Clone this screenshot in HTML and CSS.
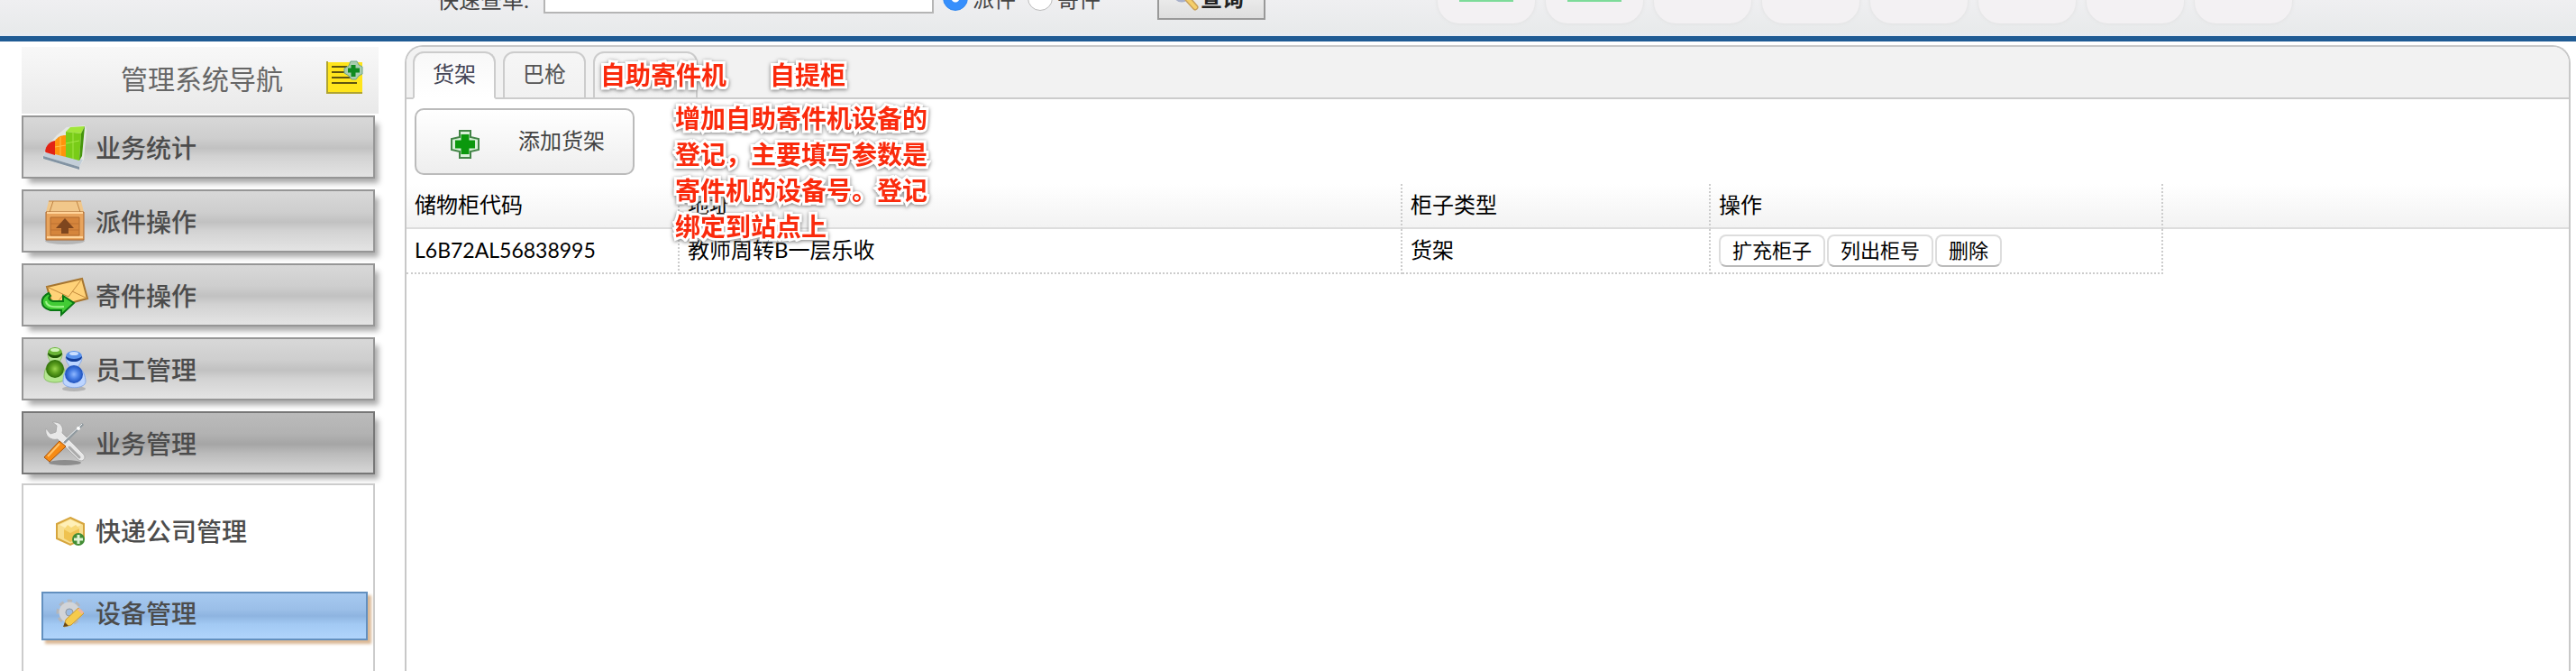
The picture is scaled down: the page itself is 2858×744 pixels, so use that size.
FILE: index.html
```html
<!DOCTYPE html>
<html lang="zh-CN">
<head>
<meta charset="utf-8">
<title>管理系统</title>
<link rel="stylesheet" href="styles.css">
</head>
<body>
<header class="topbar">
  <form class="search">
    <label class="search-label" for="q">快速查单:</label>
    <input class="search-input" id="q" type="text">
    <label class="choice"><input class="radio" type="radio" name="kind" checked>派件</label>
    <label class="choice"><input class="radio" type="radio" name="kind">寄件</label>
    <button class="search-button" type="button">
      <svg width="28" height="28" viewBox="0 0 28 28"><circle cx="9" cy="9" r="8" fill="#dfe6f2" stroke="#a9b1cb" stroke-width="3"/><path d="M15 14l9 10" stroke="#c9a05a" stroke-width="7" stroke-linecap="round"/><path d="M15 14l9 10" stroke="#f5cf6a" stroke-width="4" stroke-linecap="round"/></svg>查询
    </button>
  </form>
  <div class="tiles">
    <span class="tile tile-on"></span><span class="tile tile-on"></span><span class="tile"></span><span class="tile"></span><span class="tile"></span><span class="tile"></span><span class="tile"></span><span class="tile"></span>
  </div>
</header>
<div class="layout">
  <nav class="sidebar">
    <div class="nav-head">
      <span class="nav-title">管理系统导航</span>
      <svg width="40" height="38" viewBox="0 0 40 38"><path d="M0 1h40v35H0z" fill="#ffe51c"/><path d="M1 0v35h39" fill="none" stroke="#b0a430" stroke-width="2"/><path d="M6 6h17M6 12h17M6 18h28M6 24h28" stroke="#5e5410" stroke-width="2"/><path d="M27 0h7l2 4 4 2v8l-4 2-3 4h-5l-3-4-5-3V8l5-3z" fill="#a9cdb0" stroke="#6fa583"/><path d="M30 4v13M24 10h13" stroke="#108a20" stroke-width="5"/></svg>
    </div>
    <a class="nav-item" href="#">
      <svg width="52" height="50" viewBox="0 0 52 50"><path d="M3 31l4-9 10-11 11-9L48 0l2 5-3 33-7 11L1 37z" fill="#e9ece9" opacity=".8"/><path d="M4 30l42 8-4 8L2 34z" fill="#c3ced8"/><path d="M2 34l40 12v3L2 37z" fill="#8293a3"/><path d="M4 29c1-7 5-11 11-12v16l-10-3z" fill="#e22314"/><path d="M15 17c3-4 6-6 12-6v24l-12-3z" fill="#ff930c"/><path d="M15 24l12-2M21 13v20" stroke="#ffc24a" stroke-width="1"/><path d="M27 7l5-5 16-1-4 8z" fill="#a1e63a"/><path d="M27 7l17 2-2 30-15-4z" fill="#79cc18"/><path d="M44 9l4-8-3 33-3 5z" fill="#45950b"/><path d="M35 8v29M27 20l15-3" stroke="#a4e646" stroke-width="1"/></svg>业务统计</a>
    <a class="nav-item" href="#">
      <svg width="52" height="50" viewBox="0 0 52 50"><ellipse cx="26" cy="46" rx="22" ry="4" fill="#8d8d8d" opacity=".5"/><path d="M8 2h36l3 12H5z" fill="#f1c78a"/><path d="M8 2h36M13 2l-4 12M39 2l4 12" fill="none" stroke="#bf8343"/><path d="M5 14h42v31H5z" fill="#e8a45d" stroke="#a9642c"/><path d="M10 20h32v20H10z" fill="#d5853c" stroke="#b16b2f"/><path d="M10 27h32M10 34h32" stroke="#bd7131"/><path d="M26 21l10 11h-6v6h-8v-6h-6z" fill="#7e461e"/><path d="M6 15h40M6 42h40" stroke="#ffd49a" stroke-width="2"/></svg>派件操作</a>
    <a class="nav-item" href="#">
      <svg width="52" height="50" viewBox="0 0 52 50"><path d="M6 15L45 6l6 22-38 10z" fill="#ffd278" stroke="#a6752f" stroke-width="2"/><path d="M6 15l24 11L45 6M13 38l11-14M51 28L34 20" fill="none" stroke="#c48b3d"/><path d="M8 22C-2 27-2 38 10 41h12v5l14-13-12-8v6H13c-5-1-6-4-3-6z" fill="#42cb35" stroke="#087812" stroke-width="2"/><path d="M5 31c1 6 7 7 20 6" fill="none" stroke="#9ef489" stroke-width="2"/></svg>寄件操作</a>
    <a class="nav-item" href="#">
      <svg width="52" height="50" viewBox="0 0 52 50"><defs><radialGradient id="green"><stop offset="0" stop-color="#9ad650"/><stop offset=".5" stop-color="#5da01f"/><stop offset="1" stop-color="#2f6f08"/></radialGradient><radialGradient id="blue"><stop offset="0" stop-color="#8fb8ff"/><stop offset=".5" stop-color="#4a80e6"/><stop offset="1" stop-color="#1d50bb"/></radialGradient></defs><ellipse cx="36" cy="46" rx="13" ry="3" fill="#999" opacity=".6"/><path d="M7 7c0 6 3 8 3 10C5 20 3 27 3 33c0 8 24 8 24 0 0-6-3-13-7-16 0-2 3-4 3-10z" fill="#b4e690" stroke="#86bd60"/><ellipse cx="15" cy="6" rx="8" ry="6" fill="#6ab436"/><path d="M7 6c4 4 12 4 16 0 0 8-16 8-16 0z" fill="#1d5205"/><circle cx="15" cy="24" r="10" fill="url(#green)"/><ellipse cx="15" cy="3" rx="5" ry="2" fill="#d0f3b9"/><path d="M27 11c0 6 4 8 4 11-5 3-7 10-7 16 0 9 25 9 25 0 0-6-3-13-8-16 0-3 4-5 4-11z" fill="#bdd5ff" stroke="#86a9e6"/><ellipse cx="36" cy="10" rx="9" ry="6" fill="#5b93ec"/><path d="M27 10c4 4 14 4 18 0 0 8-18 8-18 0z" fill="#123c98"/><circle cx="36" cy="30" r="10" fill="url(#blue)"/><ellipse cx="36" cy="7" rx="5" ry="2" fill="#cbdfff"/></svg>员工管理</a>
    <a class="nav-item nav-item-open" href="#">
      <svg width="52" height="50" viewBox="0 0 52 50"><ellipse cx="26" cy="46" rx="18" ry="3" fill="#666" opacity=".6"/><path d="M5 8l5 6 6-2 1-7-5-4c9-1 13 5 11 12l24 24c3 4-1 9-6 6L18 20C10 22 3 16 5 8z" fill="#e8e8e8" stroke="#ababab"/><path d="M31 29l11 11" stroke="#aaa" stroke-width="3" stroke-linecap="round"/><path d="M46 3L25 24" stroke="#8f999f" stroke-width="3"/><path d="M45 3L24 23" stroke="#f6f6f6" stroke-width="1"/><circle cx="41" cy="8" r="2" fill="#fff"/><path d="M20 22l7 6L9 45l-6-5z" fill="#f68b16" stroke="#a95208"/><path d="M20 25L7 39" stroke="#ffc36a" stroke-width="2"/></svg>业务管理</a>
    <div class="subnav">
      <a class="sub-item" href="#">
        <svg width="32" height="32" viewBox="0 0 32 32"><path d="M16 1l15 7v16l-15 7L1 24V8z" fill="#f8df91" stroke="#d6a53d" stroke-width="2"/><path d="M4 9l12-6 12 6-12 6z" fill="#fff0b8"/><path d="M9 14l7 3 10-4v10l-10 5-7-4z" fill="#efc250"/><path d="M9 14l4-5 4 3 5-3 4 4-10 5z" fill="#f8d877"/><circle cx="25" cy="25" r="7" fill="#438d35"/><path d="M25 20v10M20 25h10" stroke="#e1f5d5" stroke-width="3"/></svg>快递公司管理</a>
      <a class="sub-item sub-item-active" href="#">
        <svg width="32" height="32" viewBox="0 0 32 32"><circle cx="15" cy="15" r="12" fill="none" stroke="#b4b6ba" stroke-width="5" stroke-dasharray="5 4"/><circle cx="15" cy="15" r="8" fill="none" stroke="#d2d4d8" stroke-width="7"/><circle cx="15" cy="15" r="4" fill="#9dbce2" stroke="#999"/><path d="M25 10l6 6-14 13-8 2 2-8z" fill="#f5cb4c" stroke="#c99a33"/><path d="M25 11l5 5" stroke="#f0b49c" stroke-width="3"/><path d="M10 26l4 4-6 1z" fill="#66471b"/></svg>设备管理</a>
    </div>
  </nav>
  <main class="panel">
    <div class="tabs">
      <button class="tab tab-active" type="button">货架</button>
      <button class="tab" type="button">巴枪</button>
      <button class="tab tab-blank" type="button" aria-label="自助寄件机"></button>
      <p class="note note-tabs"><span>自助寄件机</span><span>自提柜</span></p>
    </div>
    <div class="tools">
      <button class="add-button" type="button">
        <svg class="add-icon" width="32" height="32" viewBox="0 0 32 32"><path d="M10 1h12v7l9 2v12l-9 2v7H10v-7l-9-2V10l9-2z" fill="#d8f0d8" stroke="#438547" stroke-width="2"/><path d="M16 5v22M5 16h22" stroke="#0b980d" stroke-width="9"/></svg>添加货架
      </button>
      <p class="note note-body">增加自助寄件机设备的登记，主要填写参数是寄件机的设备号。登记绑定到站点上</p>
    </div>
    <div class="grid">
      <table class="table">
        <colgroup><col class="col-code"><col class="col-address"><col class="col-type"><col class="col-actions"><col></colgroup>
        <thead><tr><th>储物柜代码</th><th>地址</th><th>柜子类型</th><th>操作</th><th class="rest"></th></tr></thead>
        <tbody><tr><td class="code">L6B72AL56838995</td><td>教师周转B一层乐收</td><td>货架</td><td><div class="actions"><button class="small" type="button">扩充柜子</button><button class="small" type="button">列出柜号</button><button class="small" type="button">删除</button></div></td><td class="rest"></td></tr></tbody>
      </table>
    </div>
  </main>
</div>
</body>
</html>
```

FILE: styles.css
```css
* { box-sizing: border-box; }
body {
  margin: 0;
  height: 100vh;
  display: flex;
  flex-direction: column;
  overflow: hidden;
  background: #fff;
  color: #000;
  font: 24px/32px Lato, "Noto Sans CJK SC", sans-serif;
}
button, input { font: inherit; margin: 0; }
a { color: inherit; text-decoration: none; }
svg { flex: none; overflow: visible; }

.topbar {
  flex: none;
  height: 46px;
  display: flex;
  align-items: flex-end;
  gap: 191px;
  padding-left: 485px;
  overflow: hidden;
  border-bottom: 6px solid #1f5b94;
  background: linear-gradient(#efeff1, #e8eaeb 85%, #e6ebf2);
}
.search { display: flex; align-items: flex-end; padding-bottom: 18px; color: #444; }
.search-label { width: 118px; padding-bottom: 6px; line-height: 32px; }
.search-input { width: 433px; height: 48px; margin: 0 10px 7px 0; border: 2px solid #b5b5b5; background: #fff; }
.choice { display: flex; align-items: flex-end; gap: 5px; height: 42px; padding-bottom: 7px; margin-right: 13px; }
.radio { appearance: none; width: 28px; height: 28px; margin-bottom: 3px; border: 1px solid #bbb; border-radius: 50%; background: #fff; }
.radio:checked { border-color: #2e86f0; background: radial-gradient(circle, #fff 4px, #378ffc 5px); }
.search-button { display: flex; align-items: center; gap: 2px; width: 120px; height: 52px; margin-left: 50px; padding: 4px 16px 0; border: 2px solid #999; background: linear-gradient(#fafafa, #dedede); color: #222; font-weight: 700; white-space: nowrap; }
.tiles { display: flex; gap: 12px; padding-bottom: 14px; }
.tile { width: 108px; height: 108px; border-radius: 24px; background: #f3f1f3; box-shadow: 0 0 4px #dedede; }
.tile-on { background: linear-gradient(#7ddb99, #7ddb99) center 76px / 60px 8px no-repeat #f3f1f3; }

.layout { flex: 1; min-height: 0; display: flex; padding: 4px 6px 0 24px; }
.sidebar { width: 396px; flex: none; display: flex; flex-direction: column; margin-right: 29px; padding-top: 2px; color: #4c4c4c; }
.nav-head { flex: none; display: flex; align-items: center; justify-content: space-between; height: 74px; margin-bottom: 2px; padding: 0 18px 4px 110px; background: linear-gradient(#f8f8f8, #e9e9e9); color: #666; }
.nav-title { font-size: 30px; line-height: 40px; }
.nav-item, .sub-item { display: flex; align-items: center; font-size: 28px; font-weight: 500; line-height: 40px; }
.nav-item {
  flex: none;
  width: 392px;
  height: 70px;
  margin-bottom: 12px;
  padding: 2px 0 0 20px;
  gap: 8px;
  border: 2px solid #969696;
  background: linear-gradient(#d8d8d8, #cecece 35%, #c1c1c1 52%, #d2d2d2 66%, #e4e4e4);
  box-shadow: 6px 7px 6px -2px #aaa;
}
.nav-item-open { margin-bottom: 10px; border-color: #777; background: linear-gradient(#bbb, #b2b2b2 35%, #a5a5a5 52%, #bbb 68%, #d6d6d6); }
.subnav { flex: 1; width: 392px; padding: 24px 6px 0 20px; border: 2px solid #ccc; border-bottom: 0; }
.sub-item { height: 54px; margin-bottom: 40px; padding: 0 0 0 14px; gap: 12px; border: 2px solid transparent; }
.sub-item-active { padding-bottom: 6px; border-color: #6390bf; background: linear-gradient(#a6c9f0, #9bbfe8 35%, #8eb4e0 50%, #a2c9f3 68%, #b0d4fb); box-shadow: 4px 4px 3px #dbb996; }

.panel { flex: 1; min-width: 0; border: 2px solid #c8c8c8; border-bottom: 0; border-radius: 20px 20px 0 0; }
.tabs { position: relative; display: flex; align-items: flex-end; gap: 8px; height: 58px; padding-left: 7px; border-bottom: 2px solid #ccc; border-radius: 18px 18px 0 0; background: #f2f2f2; }
.tab { width: 92px; height: 53px; margin-bottom: -2px; padding: 0 0 4px; border: 2px solid #ccc; border-radius: 12px 12px 0 0; background: linear-gradient(#f6f6f6, #f1f1f1); color: #555; }
.tab-active { border-bottom-color: #fff; background: linear-gradient(#f8f8f8, #fff); color: #445; }
.tab-blank { width: 116px; }
.tools { position: relative; height: 94px; padding: 10px 9px; }
.add-button { display: flex; align-items: center; gap: 43px; width: 244px; height: 74px; padding: 0 0 3px 38px; border: 2px solid #bbb; border-radius: 10px; background: linear-gradient(#fff, #eee); color: #444; }
.add-icon { margin-top: 8px; }

.table { width: 100%; border-collapse: separate; border-spacing: 0; table-layout: fixed; }
.col-code { width: 303px; }
.col-address { width: 802px; }
.col-type { width: 342px; }
.col-actions { width: 502px; }
.table th, .table td { height: 50px; padding: 0 0 3px 9px; border-right: 2px dotted #ccc; text-align: left; font-weight: 400; white-space: nowrap; }
.table th { border-bottom: 2px solid #ddd; }
.table thead tr { background: linear-gradient(#fff, #f2f2f2); }
.table td { border-bottom: 2px dotted #ccc; }
.table td.code { font-size: 23px; }
.table th.rest { border-right: 0; }
.table td.rest { border: 0; }
.actions { display: flex; gap: 2px; padding-top: 2px; }
.small { height: 36px; padding: 0 13px; border: 2px solid #ddd; border-bottom-color: #bbb; border-radius: 8px; background: #fff; color: #000; font-size: 22px; line-height: 30px; }

.note { position: absolute; z-index: 1; margin: 0; color: #fa2a0c; font-size: 28px; font-weight: 700; line-height: 40px; -webkit-text-stroke: 6px #fff; paint-order: stroke fill; filter: drop-shadow(0 1px 2px #777); }
.note-tabs { display: flex; gap: 48px; left: 215px; top: 11px; }
.note-body { width: 281px; left: 298px; top: 1px; }
```
